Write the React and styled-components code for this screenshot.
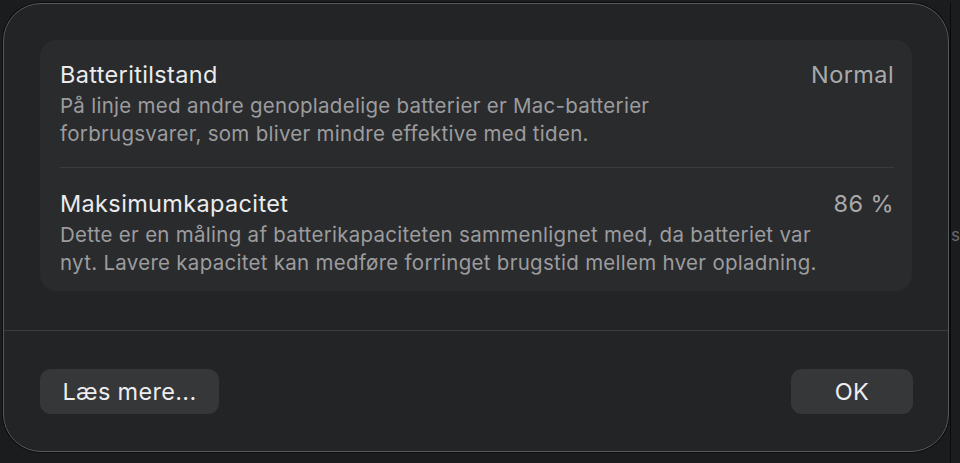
import React from 'react'
import styled, { createGlobalStyle } from 'styled-components'

const GlobalStyle = createGlobalStyle`
  html, body {
    margin: 0;
    padding: 0;
    background: #1b1c1e;
    overflow: hidden;
  }
  body {
    font-family: Inter, "Noto Sans", "Liberation Sans", sans-serif;
    -webkit-font-smoothing: antialiased;
  }
`

// the lines break where macOS breaks them
const rows = [
  {
    title: 'Batteritilstand',
    value: 'Normal',
    text: 'På linje med andre genopladelige batterier er Mac-batterier\nforbrugsvarer, som bliver mindre effektive med tiden.',
  },
  {
    title: 'Maksimumkapacitet',
    value: '86 %',
    text: 'Dette er en måling af batterikapaciteten sammenlignet med, da batteriet var\nnyt. Lavere kapacitet kan medføre forringet brugstid mellem hver opladning.',
  },
]

export default function App() {
  return (
    <>
      <GlobalStyle />
      <Page>
        <Dialog>
          <Card>
            {rows.map((r, i) => (
              <Row key={r.title} first={i === 0}>
                <RowText>
                  <Title>{r.title}</Title>
                  <Desc>{r.text}</Desc>
                </RowText>
                <Value>{r.value}</Value>
              </Row>
            ))}
          </Card>
          <Footer>
            <Button wide>Læs mere...</Button>
            <Button>OK</Button>
          </Footer>
        </Dialog>
        <Behind>
          <span>s</span>
        </Behind>
      </Page>
    </>
  )
}

const Page = styled.div`
  width: 960px;
  height: 463px;
  display: flex;
  padding: 3px 0 0 3px;
  box-sizing: border-box;
  overflow: hidden;
`

const Dialog = styled.div`
  flex: none;
  width: 946px;
  height: 449px;
  box-sizing: border-box;
  background: #232426;
  border: 1.5px solid #58595c;
  border-radius: 38px;
  box-shadow: 0 0 0 1px #0c0c0d;
  display: flex;
  flex-direction: column;
`

const Card = styled.div`
  margin: 36px 36px 0 36px;
  background: #2a2b2d;
  border-radius: 16px;
  padding: 0 18px 0 20px;
  height: 251px;
  box-sizing: border-box;
`

const Row = styled.div`
  display: flex;
  justify-content: space-between;
  align-items: flex-start;
  padding: ${({ first }) => (first ? '21px 0 19px' : '22px 0 0')};
  border-top: ${({ first }) => (first ? 'none' : '1px solid #3a3b3d')};
`

const RowText = styled.div`
  display: flex;
  flex-direction: column;
  gap: 2px;
`

const Title = styled.div`
  font-size: 23.5px;
  line-height: 28px;
  letter-spacing: 0.35px;
  color: #ebebed;
`

const Desc = styled.div`
  font-size: 20.5px;
  line-height: 28px;
  letter-spacing: 0.28px;
  color: #9c9c9f;
  white-space: pre-line;
  padding-top: 1px;
`

const Value = styled.div`
  font-size: 23.5px;
  line-height: 28px;
  letter-spacing: 0.4px;
  color: #a9a9ac;
`

const Footer = styled.div`
  margin-top: 39px;
  border-top: 1.5px solid #3b3c3e;
  padding: 38px 35px 0 36px;
  display: flex;
  justify-content: space-between;
`

const Button = styled.button`
  width: ${({ wide }) => (wide ? '179px' : '122px')};
  height: 45px;
  border: none;
  border-radius: 11px;
  background: #363739;
  color: #ededef;
  font-family: inherit;
  font-size: 23.5px;
  letter-spacing: 0.3px;
  padding: 0;
`

const Behind = styled.div`
  flex: 1;
  margin-left: 1px;
  border-left: 1px solid #0a0a0b;
  padding-top: 220px;
  overflow: hidden;

  span {
    display: block;
    color: #6a6a6d;
    font-size: 17px;
    line-height: 24px;
  }
`
